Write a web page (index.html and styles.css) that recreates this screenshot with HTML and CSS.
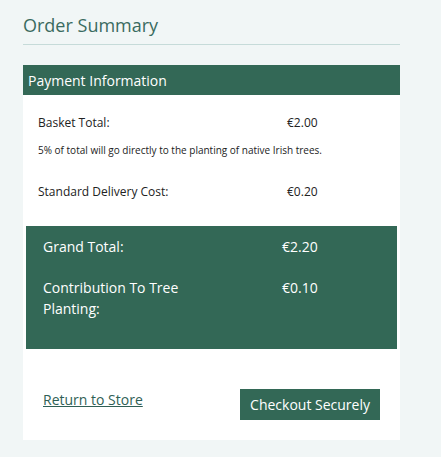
FILE: index.html
```html
<!DOCTYPE html>
<html lang="en">
<head>
<meta charset="utf-8">
<title>Order Summary</title>
<link rel="stylesheet" href="styles.css">
</head>
<body>
<div class="summary">
  <h2 class="title">Order Summary</h2>
  <div class="panel">
    <div class="panel-head">Payment Information</div>
    <div class="panel-body">
      <div class="row row-basket">
        <span class="label">Basket Total:</span>
        <span class="value">€2.00</span>
      </div>
      <p class="note">5% of total will go directly to the planting of native Irish trees.</p>
      <div class="row row-delivery">
        <span class="label">Standard Delivery Cost:</span>
        <span class="value">€0.20</span>
      </div>
      <div class="totals">
        <div class="trow">
          <span class="tlabel">Grand Total:</span>
          <span class="tvalue">€2.20</span>
        </div>
        <div class="trow trow-second">
          <span class="tlabel">Contribution To Tree Planting:</span>
          <span class="tvalue">€0.10</span>
        </div>
      </div>
      <div class="actions">
        <a class="return-link" href="#">Return to Store</a>
        <button class="checkout" type="button">Checkout Securely</button>
      </div>
    </div>
  </div>
</div>
</body>
</html>
```

FILE: styles.css
```css
* { box-sizing: border-box; }

body {
  margin: 0;
  background: #f1f6f6;
  font-family: "Open Sans", "Noto Sans", sans-serif;
  color: #222;
}

.summary {
  width: 377px;
  margin-left: 23px;
  padding-top: 11px;
}

.title {
  margin: 0 0 20px;
  font-size: 18px;
  line-height: 28px;
  font-weight: 400;
  color: #3a6b60;
  padding-bottom: 5px;
  border-bottom: 1px solid #c6dbd9;
}

.panel-head {
  height: 30px;
  background: #336856;
  color: #fff;
  font-size: 14px;
  line-height: 30px;
  padding: 1px 0 0 5px;
}

.panel-body {
  background: #fff;
  padding: 18px 0 20px;
}

.row {
  display: grid;
  grid-template-columns: 249px 1fr;
  padding-left: 15px;
  font-size: 12px;
  line-height: 20px;
}

.note {
  margin: 10px 0 0;
  padding-left: 15px;
  font-size: 10px;
  line-height: 14px;
}

.row-delivery { margin-top: 25px; }

.totals {
  margin: 24px 3px 0;
  background: #336856;
  color: #fff;
  padding: 10px 17px 30px;
}

.trow {
  display: grid;
  grid-template-columns: 239px 1fr;
  font-size: 14px;
  line-height: 21px;
}

.tlabel { padding-right: 60px; }

.trow-second { margin-top: 20px; }

.actions {
  margin-top: 40px;
  padding: 0 20px;
  display: flex;
  justify-content: space-between;
  align-items: flex-start;
}

.return-link {
  margin-top: 1px;
  font-size: 14px;
  line-height: 20px;
  color: #2f5f55;
  text-decoration: underline;
}

.checkout {
  border: 0;
  margin: 0;
  background: #336856;
  color: #fff;
  font-family: inherit;
  font-size: 14px;
  line-height: 31px;
  height: 31px;
  padding: 0 10px;
}
```
